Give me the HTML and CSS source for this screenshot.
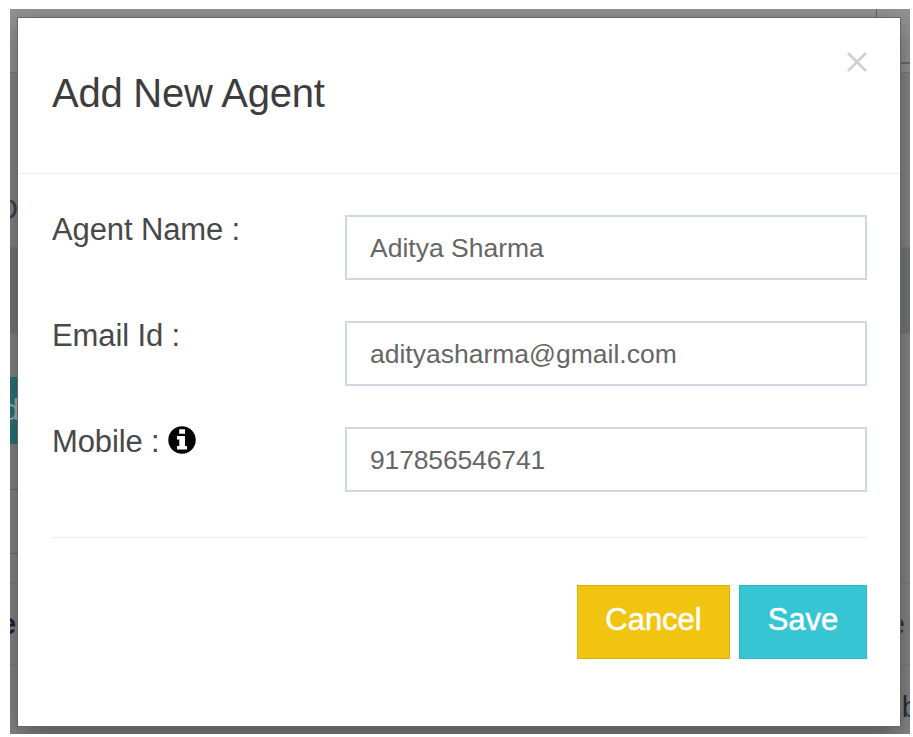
FILE: index.html
```html
<!DOCTYPE html>
<html lang="en">
<head>
<meta charset="utf-8">
<title>Add New Agent</title>
<link rel="stylesheet" href="styles.css">
</head>
<body>
<div class="screen">
  <div class="page" aria-hidden="true">
    <div class="topbar"><div class="topbar-cell"></div></div>
    <div class="intro"><span class="intro-mark">D</span></div>
    <div class="band"></div>
    <div class="action"><span>d</span></div>
    <div class="row row-a"></div>
    <div class="row row-b"></div>
    <div class="row row-c"></div>
    <div class="row row-d"><b>e</b><span>e</span></div>
    <div class="row row-e"><span>b</span></div>
  </div>
  <section class="modal" role="dialog" aria-labelledby="title">
    <header class="modal-header">
      <h1 id="title" class="title">Add New Agent</h1>
      <button class="close" aria-label="Close">
        <svg width="20" height="20" viewBox="0 0 20 20"><path d="M1 1 19 19M19 1 1 19"/></svg>
      </button>
    </header>
    <form class="form">
      <div class="field">
        <label for="name"><span class="label-text">Agent Name :</span></label>
        <input id="name" class="input" value="Aditya Sharma">
      </div>
      <div class="field">
        <label for="email"><span class="label-text">Email Id :</span></label>
        <input id="email" class="input" value="adityasharma@gmail.com">
      </div>
      <div class="field">
        <label for="mobile"><span class="label-text">Mobile :</span>
          <svg class="info" width="28" height="28" viewBox="0 0 28 28"><circle cx="14" cy="14" r="13.7"/><path d="M11.2 3.2h5.8v4.6h-5.8zM9 10h8v10h2v3.5H9V20h2.3v-6.5H9z"/></svg>
        </label>
        <input id="mobile" class="input input-mobile" value="917856546741">
      </div>
      <div class="actions">
        <button type="button" class="btn btn-cancel">Cancel</button>
        <button type="button" class="btn btn-save">Save</button>
      </div>
    </form>
  </section>
</div>
</body>
</html>
```
FILE: styles.css
```css
* { box-sizing: border-box; }
body {
  margin: 0;
  background: #fff;
  font-family: "Liberation Sans", Arial, sans-serif;
}
.screen {
  position: relative;
  width: 900px;
  height: 725px;
  margin: 9px 0 0 10px;
  overflow: hidden;
  background: #858585;
}

/* Dimmed page behind the dialog */
.page {
  display: flex;
  flex-direction: column;
  height: 725px;
  color: #1b2437;
  font-size: 29px;
  line-height: 32px;
}
.topbar {
  display: flex;
  justify-content: flex-end;
  height: 64px;
  border-bottom: 1px solid #797979;
  background: #929292;
}
.topbar-cell {
  width: 34px;
  height: 55px;
  border-left: 1px solid #60636c;
  border-bottom: 2px solid #686b74;
}
.intro { height: 174px; padding-top: 120px; }
.intro-mark { margin-left: -13px; color: #394252; }
.band {
  height: 87px;
  background: #757678;
  border-top: 1px solid #7b7b7b;
  border-bottom: 1px solid #7b7b7b;
}
.action {
  width: 80px;
  height: 67px;
  margin-top: 43px;
  padding-top: 17px;
  background: #28747c;
  color: #a5b1ad;
}
.action span { margin-left: -7px; }
.row {
  display: flex;
  justify-content: space-between;
  border-bottom: 1px solid #7b7b7b;
}
.row-a, .row-b { width: 80px; border-color: #666970; }
.row-a { height: 46px; }
.row-b { height: 64px; }
.row-c { height: 30px; }
.row-d { height: 81px; padding-top: 24px; }
.row-d b { margin-left: -10px; }
.row-d span { margin-right: 5px; color: #1f3350; }
.row-e { justify-content: flex-end; padding-top: 26px; border: 0; }
.row-e span { margin-right: -8px; color: #262f40; }

/* Dialog */
.modal {
  position: absolute;
  top: 9px;
  left: 8px;
  width: 882px;
  height: 708px;
  background: #fff;
  outline: 1px solid #666;
  box-shadow: 0 8px 24px rgba(0, 0, 0, .4);
}
.modal-header {
  display: flex;
  justify-content: space-between;
  height: 156px;
  padding: 34px 33px 0 34px;
  border-bottom: 1px solid #ececec;
}
.title {
  margin: 0;
  font-size: 40px;
  font-weight: 400;
  line-height: 82px;
  height: 82px;
  letter-spacing: -.25px;
  color: #3d3d3d;
}
.close {
  width: 20px;
  height: 20px;
  padding: 0;
  border: 0;
  background: none;
}
.close svg {
  display: block;
  stroke: #d0d0d0;
  stroke-width: 2.8;
  fill: none;
}
.form { padding: 41px 33px 0 34px; }
.field {
  display: flex;
  justify-content: space-between;
  height: 65px;
  margin-bottom: 41px;
}
.field label {
  display: flex;
  gap: 8px;
  height: 32px;
  color: #484848;
  font-size: 31px;
  line-height: 30px;
  letter-spacing: -.12px;
}
.label-text { white-space: pre; }
.info { margin-top: -1px; fill: #000; }
.info path { fill: #fff; }
.input {
  width: 522px;
  height: 65px;
  padding: 1px 23px 0;
  border: 2px solid #d0d7e5;
  background: #fff;
  color: #666;
  font: 26.5px "Liberation Sans", Arial, sans-serif;
}
.input-mobile { letter-spacing: -.15px; }
.actions {
  display: flex;
  justify-content: flex-end;
  gap: 9px;
  margin-top: 45px;
  padding-top: 47px;
  border-top: 1px solid #ececec;
}
.btn {
  height: 74px;
  padding: 0 0 4px;
  border: 1px solid;
  color: #fff;
  font: 31px "Liberation Sans", Arial, sans-serif;
  -webkit-text-stroke: .5px #fff;
}
.btn-cancel { width: 153px; background: #f1c40f; border-color: #dab10d; }
.btn-save { width: 128px; background: #36c6d3; border-color: #2bb8c4; }
```
